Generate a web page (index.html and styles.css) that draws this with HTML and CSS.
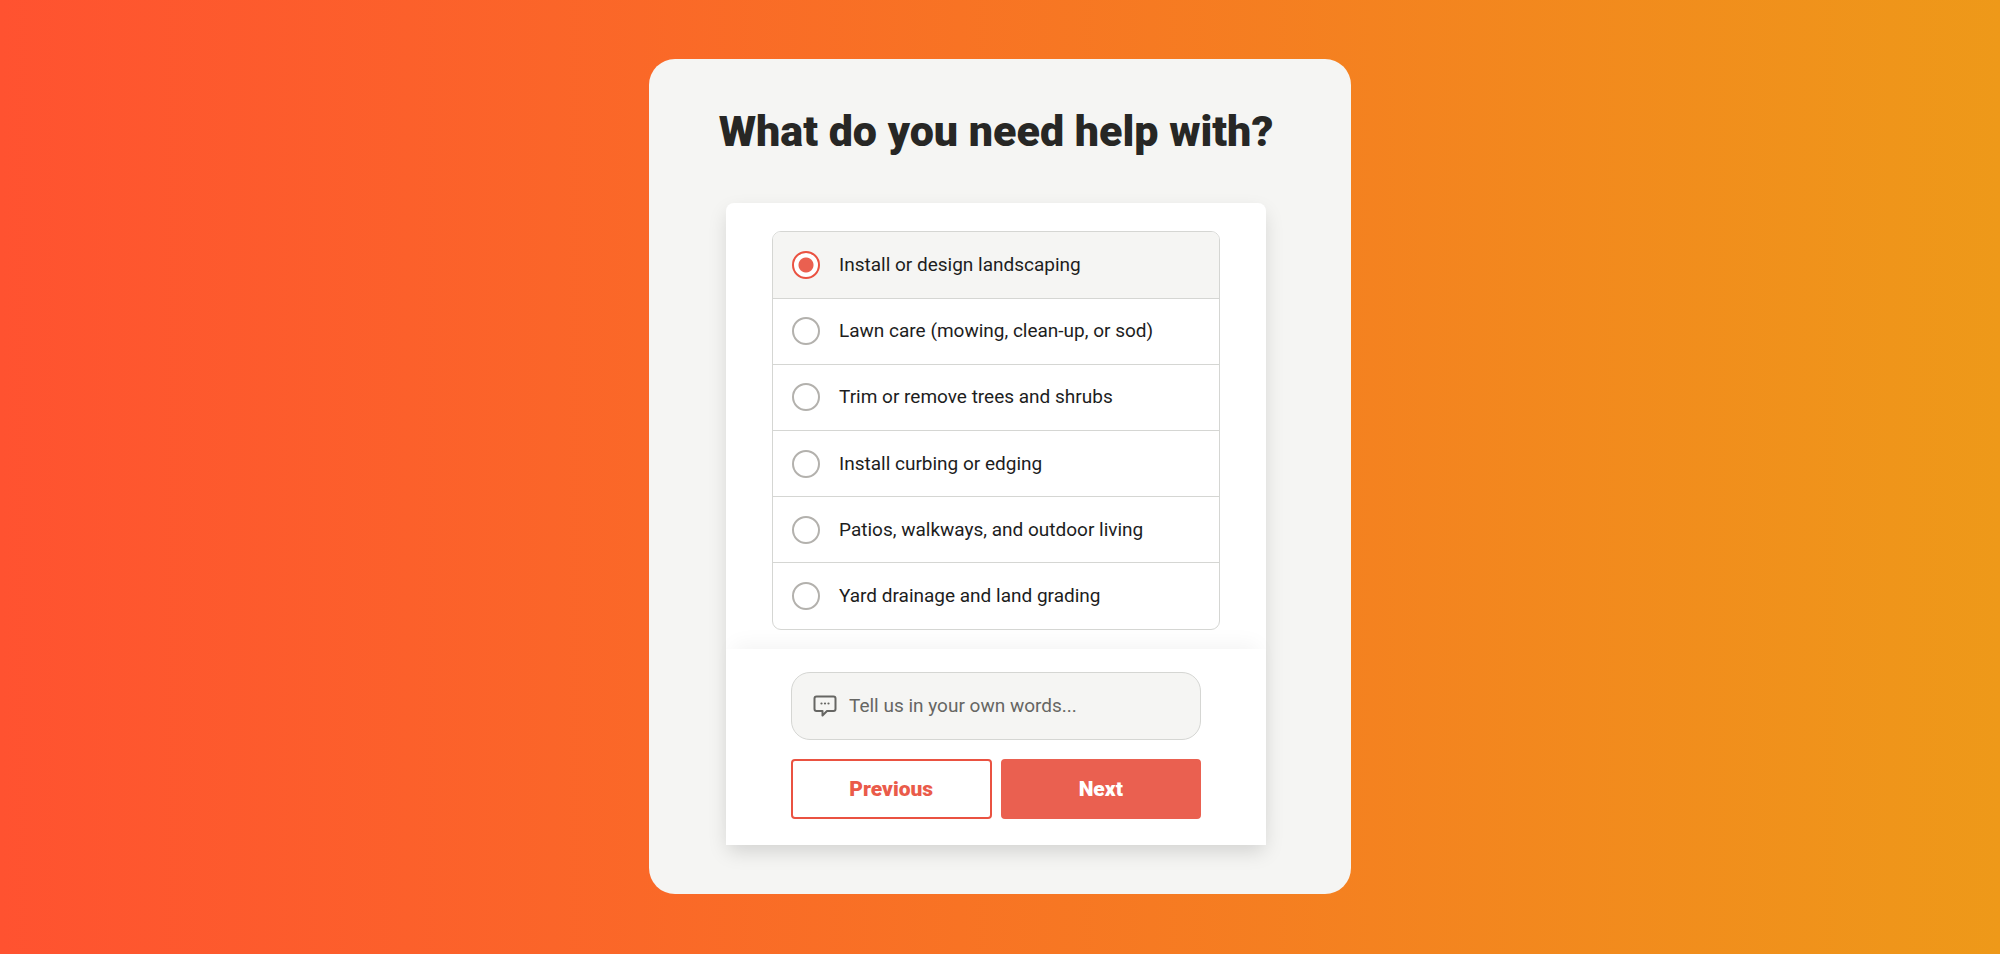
FILE: index.html
```html
<!DOCTYPE html>
<html lang="en">
<head>
<meta charset="utf-8">
<title>What do you need help with?</title>
<link rel="stylesheet" href="styles.css">
</head>
<body>
<main class="card">
  <h1 class="title">What do you need help with?</h1>
  <form class="panel">
    <div class="choices" role="radiogroup" aria-label="What do you need help with?">
      <label class="choice"><input class="radio" type="radio" name="service" checked><span>Install or design landscaping</span></label>
      <label class="choice"><input class="radio" type="radio" name="service"><span>Lawn care (mowing, clean-up, or sod)</span></label>
      <label class="choice"><input class="radio" type="radio" name="service"><span>Trim or remove trees and shrubs</span></label>
      <label class="choice"><input class="radio" type="radio" name="service"><span>Install curbing or edging</span></label>
      <label class="choice"><input class="radio" type="radio" name="service"><span>Patios, walkways, and outdoor living</span></label>
      <label class="choice"><input class="radio" type="radio" name="service"><span>Yard drainage and land grading</span></label>
    </div>
    <div class="footer">
      <label class="own-words">
        <svg class="icon" viewBox="0 0 24 22" fill="none" aria-hidden="true">
          <path d="M3.500 1.500H20.500Q22.500 1.500 22.500 3.500V14Q22.500 16 20.500 16H14L9.500 20.500V16H3.500Q1.500 16 1.500 14V3.500Q1.500 1.500 3.500 1.500Z" stroke="currentColor" stroke-width="2" stroke-linejoin="round"/>
          <g fill="currentColor"><circle cx="8.500" cy="8.500" r="1.100"/><circle cx="12" cy="8.500" r="1.100"/><circle cx="15.500" cy="8.500" r="1.100"/></g>
        </svg>
        <input class="own-words-input" type="text" placeholder="Tell us in your own words..." aria-label="Tell us in your own words">
      </label>
      <div class="actions">
        <button class="button" type="button">Previous</button>
        <button class="button button-primary" type="button">Next</button>
      </div>
    </div>
  </form>
</main>
</body>
</html>
```
FILE: styles.css
```css
* {
  box-sizing: border-box;
}

body {
  margin: 0;
  min-height: 100vh;
  padding-bottom: 2px;
  display: flex;
  align-items: center;
  justify-content: center;
  background: linear-gradient(90deg, #ff5230, #f87324 48%, #ee9919);
  color: #1d1d1d;
  font-family: Roboto, "Noto Sans", sans-serif;
}

.card {
  width: 100%;
  max-width: 702px;
  padding: 44px 64px 49px 56px;
  display: flex;
  flex-direction: column;
  align-items: center;
  background: #f5f5f3;
  border-radius: 26px;
}

.title {
  margin: 0 0 44px;
  font-size: 43px;
  line-height: 56px;
  font-weight: 900;
  color: #272725;
  white-space: nowrap;
}

.panel {
  width: 100%;
  max-width: 540px;
  background: #fff;
  border-radius: 8px 8px 0 0;
  box-shadow: 0 8px 20px -2px rgba(0, 0, 0, 0.15);
}

.choices {
  min-height: 399px;
  margin: 28px 46px 19px;
  display: grid;
  grid-auto-rows: 1fr;
  border: 1px solid #d5d6d3;
  border-radius: 9px;
  overflow: hidden;
}

.choice {
  padding: 0 19px;
  display: flex;
  align-items: center;
  gap: 19px;
  font-size: 19px;
  line-height: 24px;
}

.choice + .choice {
  border-top: 1px solid #d5d6d3;
}

.choice:has(:checked) {
  background: #f5f5f3;
}

.radio {
  appearance: none;
  flex: none;
  width: 28px;
  height: 28px;
  margin: 0;
  border: 2px solid #b3b1ad;
  border-radius: 50%;
  background: #fff;
}

.radio:checked {
  border-color: #ea5241;
  background: radial-gradient(circle, #ea6050 7px, #fff 8px);
}

.footer {
  padding: 23px 65px 26px;
  display: flex;
  flex-direction: column;
  gap: 19px;
  background: #fff;
  box-shadow: 0 -12px 20px -8px rgba(0, 0, 0, 0.05);
}

.own-words {
  height: 68px;
  padding: 0 21px;
  display: flex;
  align-items: center;
  gap: 12px;
  border: 1px solid #d5d6d3;
  border-radius: 19px;
  background: #f5f5f3;
  color: #666663;
}

.icon {
  flex: none;
  width: 24px;
  height: 22px;
}

.own-words-input {
  flex: 1;
  min-width: 0;
  padding: 0;
  border: 0;
  outline: 0;
  background: none;
  font: inherit;
  font-size: 19px;
  line-height: 24px;
}

.own-words-input::placeholder {
  color: #666663;
  opacity: 1;
}

.actions {
  display: grid;
  grid-template-columns: 1fr 1fr;
  gap: 9px;
}

.button {
  height: 60px;
  border: 2px solid #ea5241;
  border-radius: 4px;
  background: #fff;
  color: #ea5b4a;
  font-family: inherit;
  font-size: 21px;
  font-weight: 900;
}

.button-primary {
  border-color: #ea6050;
  background: #ea6050;
  color: #fff;
}
```
